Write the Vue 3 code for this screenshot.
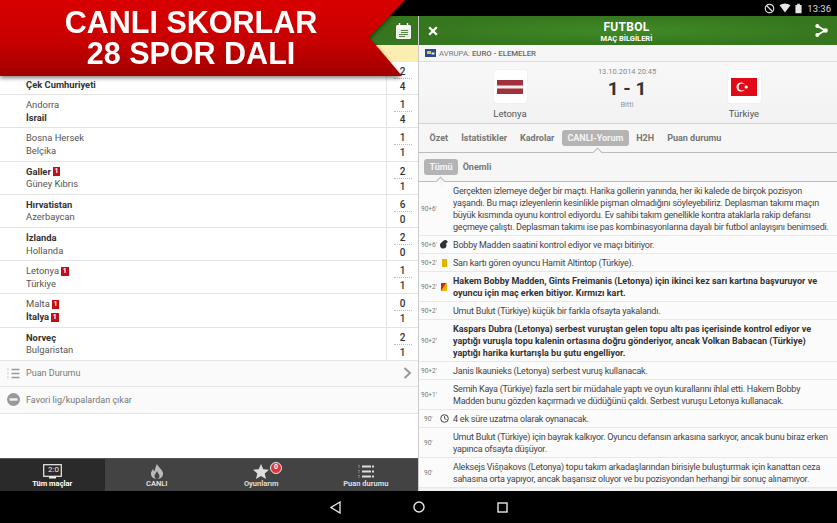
<template>
  <div class="screen">
    <div class="statusbar">
      <svg class="st-icon" width="11" height="11" viewBox="0 0 12 12"><circle cx="6" cy="6" r="4.600" fill="none" stroke="#ddd" stroke-width="1.300"/><path d="M3 3l6 6" stroke="#ddd" stroke-width="1.300"/></svg>
      <svg class="st-icon" width="12" height="10" viewBox="0 0 13 11"><path d="M0.500 2.500Q6.500 -1.500 12.500 2.500L6.500 10.500Z" fill="#e6e6e6"/></svg>
      <svg class="st-icon" width="7" height="11" viewBox="0 0 8 12"><path d="M2.500 0.500h3v1.500h2v9.500h-7V2h2z" fill="#e6e6e6"/></svg>
      <span class="clock">13:36</span>
    </div>

    <div class="panes">
      <div class="left">
        <div class="left-head">
          <div class="cal-box">
            <svg width="15" height="16" viewBox="0 0 15 16"><rect x=".6" y="2.600" width="13.800" height="12.800" rx="1" fill="#e6eee0" stroke="#fff" stroke-width="1.200"/><rect x="1" y="3" width="13" height="2.500" fill="#fff"/><path d="M3.500 0v3.500M11.500 0v3.500" stroke="#fff" stroke-width="1.400"/><path d="M5 7.500h7M5 9.500h7M3 11.500h9M3 13.500h6" stroke="#5f8350" stroke-width="1"/></svg>
          </div>
        </div>
        <div class="yellow"></div>
        <div class="matches">
          <div v-for="m in matches" :key="m.a + m.b" class="match">
            <div class="teams">
              <div class="team" :class="{ win: m.sa > m.sb }">{{ m.a }}<span v-if="m.ra" class="red">1</span></div>
              <div class="team" :class="{ win: m.sb > m.sa }">{{ m.b }}<span v-if="m.rb" class="red">1</span></div>
            </div>
            <div class="scores">
              <div class="s top">{{ m.sa }}</div>
              <div class="s">{{ m.sb }}</div>
            </div>
          </div>
        </div>
        <div class="action">
          <svg width="13" height="13" viewBox="0 0 13 13"><path d="M4.500 2.500h8M4.500 6.500h8M4.500 10.500h8" stroke="#999" stroke-width="1.500"/><path d="M1 1.500v2M1 5.500v2M1 9.500v2" stroke="#aaa" stroke-width="1" stroke-dasharray="1 .6"/></svg>
          <span>Puan Durumu</span>
          <svg class="chev" width="9" height="12" viewBox="0 0 9 12"><path d="M1.500 1l5.500 5-5.500 5" fill="none" stroke="#999" stroke-width="2"/></svg>
        </div>
        <div class="action">
          <svg width="13" height="13" viewBox="0 0 13 13"><circle cx="6.500" cy="6.500" r="6.500" fill="#999"/><rect x="2.500" y="5.300" width="8" height="2.400" fill="#f3f3f3"/></svg>
          <span>Favori lig/kupalardan çıkar</span>
        </div>
        <div class="spacer"></div>
        <div class="tabbar">
          <div class="tab on">
            <svg width="19" height="15" viewBox="0 0 19 15"><rect x=".7" y=".7" width="17.600" height="11.600" fill="none" stroke="#eee" stroke-width="1.200"/><rect x="6" y="12.500" width="7" height="2" fill="#eee"/></svg>
            <span class="score-ico">2:0</span>
            <b>Tüm maçlar</b>
          </div>
          <div class="tab">
            <svg width="14" height="15" viewBox="0 0 14 15"><path d="M7 0c1 3 5 5 6 9 .5 3-2 6-6 6s-6.500-3-6-6c.3-2 1.500-3 2-4 .5 1 .8 2 1.500 2.500C5 5 5.500 3 7 0z" fill="#bbb"/><path d="M7 7c.5 2 2.500 3 2.500 5 0 1.500-1 3-2.500 3s-2.500-1.500-2.500-3C4.500 10 6.500 9 7 7z" fill="#444"/></svg>
            <b>CANLI</b>
          </div>
          <div class="tab">
            <svg width="16" height="15" viewBox="0 0 16 15"><path d="M8 0l2.300 5.200 5.700.5-4.300 3.800 1.300 5.500L8 12l-5 3 1.300-5.500L0 5.700l5.700-.5z" fill="#ddd"/></svg>
            <span class="badge">0</span>
            <b>Oyunlarım</b>
          </div>
          <div class="tab">
            <svg width="16" height="15" viewBox="0 0 16 15"><path d="M4 2.500h9M4 7.500h9M4 12.500h9" stroke="#ddd" stroke-width="2"/><path d="M14 1.500h2v2h-2zM14 6.500h2v2h-2zM14 11.500h2v2h-2z" fill="#ddd"/><path d="M1 1v3M1 6v3M1 11v3" stroke="#bbb" stroke-width="1" stroke-dasharray="1 .6"/></svg>
            <b>Puan durumu</b>
          </div>
        </div>
      </div>

      <div class="right">
        <div class="right-head">
          <svg width="10" height="10" viewBox="0 0 10 10"><path d="M1.200 1.200l7.600 7.600M8.800 1.200l-7.600 7.600" stroke="#fff" stroke-width="2.200"/></svg>
          <div class="head-title"><b>FUTBOL</b><span>MAÇ BİLGİLERİ</span></div>
          <svg width="13" height="13" viewBox="0 0 13 13"><path d="M2.500 2l7.500 4.500-7.500 4.500" fill="none" stroke="#fff" stroke-width="1.800"/><circle cx="2.300" cy="2" r="2" fill="#fff"/><circle cx="2.300" cy="11" r="2" fill="#fff"/><circle cx="10.500" cy="6.500" r="2.300" fill="#fff"/></svg>
        </div>
        <div class="league">
          <svg width="11" height="8" viewBox="0 0 11 8"><rect width="11" height="8" fill="#2b4a8c"/><rect x="2" y="2" width="4" height="3" fill="#e6c43c"/><rect x="6.500" y="3.500" width="3" height="2" fill="#e8e8e8"/></svg>
          <span class="lg">AVRUPA:</span> <span class="lg2">EURO - ELEMELER</span>
        </div>
        <div class="match-info">
          <div class="side">
            <div class="flag-box">
              <svg width="26" height="14" viewBox="0 0 26 14"><rect width="26" height="14" fill="#a0303c"/><rect y="5.500" width="26" height="3" fill="#f4eeee"/></svg>
            </div>
            <span>Letonya</span>
          </div>
          <div class="mid">
            <div class="date">13.10.2014 20:45</div>
            <div class="big">1 - 1</div>
            <div class="done">Bitti</div>
          </div>
          <div class="side">
            <div class="flag-box">
              <svg width="26" height="18" viewBox="0 0 26 18"><rect width="26" height="18" fill="#e30a17"/><circle cx="10" cy="9" r="4.500" fill="#fff"/><circle cx="11.200" cy="9" r="3.600" fill="#e30a17"/><circle cx="15.200" cy="9" r="1.600" fill="#fff"/></svg>
            </div>
            <span>Türkiye</span>
          </div>
        </div>
        <div class="tabs">
          <span v-for="t in tabs" :key="t" class="t" :class="{ pill: t === 'CANLI-Yorum' }">{{ t }}</span>
          <i class="caret c1"></i>
        </div>
        <div class="subtabs">
          <span class="t pill">Tümü</span>
          <span class="t">Önemli</span>
          <i class="caret c2"></i>
        </div>
        <div class="feed">
          <div v-for="(r, i) in feed" :key="i" class="row">
            <div class="time" :class="{ ind: r.t === `90'` }">{{ r.t }}</div>
            <div class="ico">
              <svg v-if="r.i === 'w'" width="8" height="9" viewBox="0 0 8 9"><path d="M5 0c2 0 3 1 2.500 2.500L6 3.500c1 2 .5 5-2.500 5S0 6.500 0 5s1-2 2-3 2-2 3-2z" fill="#333"/></svg>
              <svg v-if="r.i === 'y'" width="5" height="8" viewBox="0 0 5 8"><rect width="5" height="8" fill="#e0b400"/></svg>
              <svg v-if="r.i === 'yr'" width="6" height="8" viewBox="0 0 6 8"><rect width="6" height="8" fill="#e8b800"/><path d="M0 8V0h5z" fill="#d82020"/></svg>
              <svg v-if="r.i === 'c'" width="9" height="9" viewBox="0 0 9 9"><circle cx="4.500" cy="4.500" r="3.800" fill="none" stroke="#444" stroke-width="1"/><path d="M4.500 2v2.700l2 .8" fill="none" stroke="#444" stroke-width=".9"/></svg>
            </div>
            <div class="txt" :class="{ bold: r.b }"><div v-for="l in r.l" :key="l">{{ l }}</div></div>
          </div>
        </div>
      </div>
    </div>

    <div class="navbar">
      <svg width="11" height="13" viewBox="0 0 11 13"><path d="M10 1L1 6.500 10 12z" fill="none" stroke="#e8e8e8" stroke-width="1.300"/></svg>
      <svg width="12" height="12" viewBox="0 0 12 12"><circle cx="6" cy="6" r="5" fill="none" stroke="#e8e8e8" stroke-width="1.400"/></svg>
      <svg width="11" height="11" viewBox="0 0 11 11"><rect x="1" y="1" width="9" height="9" fill="none" stroke="#e8e8e8" stroke-width="1.400"/></svg>
    </div>

    <div class="banner-wrap">
      <div class="banner">
        <div>CANLI SKORLAR</div>
        <div>28 SPOR DALI</div>
      </div>
    </div>
  </div>
</template>

<script setup>
const matches = [
  { a: 'Kazakistan', b: 'Çek Cumhuriyeti', sa: 2, sb: 4 },
  { a: 'Andorra', b: 'İsrail', sa: 1, sb: 4 },
  { a: 'Bosna Hersek', b: 'Belçika', sa: 1, sb: 1 },
  { a: 'Galler', b: 'Güney Kıbrıs', sa: 2, sb: 1, ra: true },
  { a: 'Hırvatistan', b: 'Azerbaycan', sa: 6, sb: 0 },
  { a: 'İzlanda', b: 'Hollanda', sa: 2, sb: 0 },
  { a: 'Letonya', b: 'Türkiye', sa: 1, sb: 1, ra: true },
  { a: 'Malta', b: 'İtalya', sa: 0, sb: 1, ra: true, rb: true },
  { a: 'Norveç', b: 'Bulgaristan', sa: 2, sb: 1 }
]

const tabs = ['Özet', 'İstatistikler', 'Kadrolar', 'CANLI-Yorum', 'H2H', 'Puan durumu']

const feed = [
  { t: '90+6\'', l: [
    'Gerçekten izlemeye değer bir maçtı. Harika gollerin yanında, her iki kalede de birçok pozisyon',
    'yaşandı. Bu maçı izleyenlerin kesinlikle pişman olmadığını söyleyebiliriz. Deplasman takımı maçın',
    'büyük kısmında oyunu kontrol ediyordu. Ev sahibi takım genellikle kontra ataklarla rakip defansı',
    'geçmeye çalıştı. Deplasman takımı ise pas kombinasyonlarına dayalı bir futbol anlayışını benimsedi.'
  ] },
  { t: '90+6\'', i: 'w', l: ['Bobby Madden saatini kontrol ediyor ve maçı bitiriyor.'] },
  { t: '90+2\'', i: 'y', l: ['Sarı kartı gören oyuncu Hamit Altintop (Türkiye).'] },
  { t: '90+2\'', i: 'yr', b: true, l: [
    'Hakem Bobby Madden, Gints Freimanis (Letonya) için ikinci kez sarı kartına başvuruyor ve',
    'oyuncu için maç erken bitiyor. Kırmızı kart.'
  ] },
  { t: '90+2\'', l: ['Umut Bulut (Türkiye) küçük bir farkla ofsayta yakalandı.'] },
  { t: '90+2\'', b: true, l: [
    'Kaspars Dubra (Letonya) serbest vuruştan gelen topu altı pas içerisinde kontrol ediyor ve',
    'yaptığı vuruşla topu kalenin ortasına doğru gönderiyor, ancak Volkan Babacan (Türkiye)',
    'yaptığı harika kurtarışla bu şutu engelliyor.'
  ] },
  { t: '90+2\'', l: ['Janis Ikaunieks (Letonya) serbest vuruş kullanacak.'] },
  { t: '90+1\'', l: [
    'Semih Kaya (Türkiye) fazla sert bir müdahale yaptı ve oyun kurallarını ihlal etti. Hakem Bobby',
    'Madden bunu gözden kaçırmadı ve düdüğünü çaldı. Serbest vuruşu Letonya kullanacak.'
  ] },
  { t: '90\'', i: 'c', l: ['4 ek süre uzatma olarak oynanacak.'] },
  { t: '90\'', l: [
    'Umut Bulut (Türkiye) için bayrak kalkıyor. Oyuncu defansın arkasına sarkıyor, ancak bunu biraz erken',
    'yapınca ofsayta düşüyor.'
  ] },
  { t: '90\'', l: [
    'Aleksejs Višņakovs (Letonya) topu takım arkadaşlarından birisiyle buluşturmak için kanattan ceza',
    'sahasına orta yapıyor, ancak başarısız oluyor ve bu pozisyondan herhangi bir sonuç alınamıyor.'
  ] }
]
</script>

<style>
html, body { margin: 0; background: #000; }
</style>

<style scoped>
.screen {
  position: relative;
  width: 837px;
  height: 523px;
  overflow: hidden;
  display: flex;
  flex-direction: column;
  font-family: Roboto, "Liberation Sans", sans-serif;
  color: #444;
  background: #000;
}
.statusbar {
  height: 16px;
  flex: none;
  display: flex;
  align-items: center;
  justify-content: flex-end;
  gap: 4px;
  padding-right: 6px;
  background: #000;
}
.clock { color: #ddd; font-size: 9.500px; margin-left: 1px; }
.panes { flex: 1; display: flex; min-height: 0; }
.left { width: 418px; flex: none; display: flex; flex-direction: column; background: #fff; }
.left-head { height: 29px; flex: none; background: #36761f; display: flex; justify-content: flex-end; }
.cal-box { width: 30px; display: flex; align-items: center; justify-content: center; }
.yellow { height: 17px; flex: none; background: #fbeeb0; }
.match { height: 33.200px; box-sizing: border-box; display: flex; border-bottom: 1px solid #e4e4e4; }
.teams { flex: 1; padding: 4px 0 0 26px; }
.team { font-size: 9.400px; line-height: 12.600px; color: #555; display: flex; align-items: center; }
.team.win { font-weight: 700; color: #333; }
.red {
  display: inline-block;
  width: 7.500px;
  height: 9px;
  margin-left: 2px;
  background: #c40d10;
  color: #fff;
  font-size: 7px;
  font-weight: 700;
  line-height: 9px;
  text-align: center;
}
.scores { width: 31px; flex: none; border-left: 1px solid #e4e4e4; padding-top: 3px; }
.s { width: 18px; margin: 0 auto; font-size: 10px; font-weight: 500; line-height: 13px; text-align: center; color: #333; }
.s.top { border-bottom: 1px dotted #bbb; margin-bottom: 1px; }
.action {
  height: 26.500px;
  flex: none;
  box-sizing: border-box;
  display: flex;
  align-items: center;
  gap: 6px;
  padding: 0 6px 0 7px;
  background: #fafafa;
  border-bottom: 1px solid #e6e6e6;
  font-size: 9px;
  color: #777;
}
.chev { margin-left: auto; }
.spacer { flex: 1; background: #fff; }
.tabbar { height: 32px; flex: none; display: flex; background: #434343; border-top: 1px solid #555; }
.tab {
  position: relative;
  width: 105px;
  display: flex;
  flex-direction: column;
  align-items: center;
  padding-top: 5px;
  box-sizing: border-box;
}
.tab.on { background: #2a2a2a; }
.tab b { font-size: 7.500px; line-height: 10px; color: #ddd; }
.tab.on b { color: #fff; }
.score-ico { position: absolute; top: 6px; left: 45px; font-size: 8px; line-height: 10px; color: #eee; width: 17px; text-align: center; }
.badge {
  position: absolute;
  top: 3px;
  left: 61px;
  width: 12px;
  height: 12px;
  border-radius: 50%;
  background: #e03535;
  border: 1.500px solid #eee;
  box-sizing: border-box;
  color: #fff;
  font-size: 7px;
  font-weight: 700;
  line-height: 9px;
  text-align: center;
}
.right { flex: 1; display: flex; flex-direction: column; background: #f6f6f6; border-left: 1px solid #ccc; min-width: 0; }
.right-head {
  height: 29px;
  flex: none;
  display: flex;
  align-items: center;
  justify-content: space-between;
  padding: 0 9px;
  background: radial-gradient(ellipse at center, #408a26 0, #36761f 70%);
}
.head-title { display: flex; flex-direction: column; align-items: center; color: #fff; padding-top: 2px; }
.head-title b { font-size: 12px; line-height: 13px; letter-spacing: .3px; }
.head-title span { font-size: 7.500px; line-height: 9px; font-weight: 700; }
.league {
  height: 17px;
  flex: none;
  display: flex;
  align-items: center;
  gap: 2px;
  padding-left: 6px;
  border-bottom: 1px solid #ddd;
  box-sizing: border-box;
  font-size: 7.800px;
}
.league svg { margin-right: 1px; }
.lg { color: #777; }
.lg2 { color: #666; font-weight: 500; }
.match-info {
  height: 62px;
  flex: none;
  box-sizing: border-box;
  display: flex;
  justify-content: space-between;
  padding: 8px 68px 0 66px;
  border-bottom: 1px solid #d4d4d4;
  background: linear-gradient(#f8f8f8, #f2f2f2);
}
.side { width: 50px; display: flex; flex-direction: column; align-items: center; gap: 5px; font-size: 9.500px; color: #555; }
.flag-box {
  width: 33px;
  height: 33px;
  background: #fff;
  border-radius: 2px;
  box-shadow: 0 0 1px #ccc;
  display: flex;
  align-items: center;
  justify-content: center;
}
.mid { display: flex; flex-direction: column; align-items: center; margin-top: -4px; }
.date { font-size: 7.500px; line-height: 11px; color: #888; }
.big { font-size: 19px; line-height: 22px; font-weight: 700; color: #333; margin-top: 1px; }
.done { font-size: 7.500px; line-height: 9px; color: #999; }
.tabs {
  position: relative;
  height: 29px;
  flex: none;
  box-sizing: border-box;
  display: flex;
  align-items: center;
  padding-left: 5px;
  border-bottom: 1px solid #bbb;
}
.t { padding: 0 5.500px; font-size: 9px; line-height: 16px; font-weight: 700; color: #777; white-space: nowrap; margin-right: 2px; }
.subtabs .t + .t { margin-left: -3px; }
.pill { background: #b4b4b4; color: #f4f4f4; border-radius: 3px; }
.subtabs {
  position: relative;
  height: 29px;
  flex: none;
  box-sizing: border-box;
  display: flex;
  align-items: center;
  padding-left: 5px;
  border-bottom: 1px solid #bbb;
}
.caret {
  position: absolute;
  bottom: -4px;
  width: 6px;
  height: 6px;
  background: #f6f6f6;
  border-left: 1px solid #bbb;
  border-top: 1px solid #bbb;
  transform: rotate(45deg);
}
.c1 { left: 175px; }
.c2 { left: 18px; }
.feed { flex: 1; min-height: 0; overflow: hidden; background: #f3f3f3; }
.row { display: flex; align-items: center; background: #fbfbfb; border-bottom: 1.500px solid #e8e8e8; padding: 2.500px 0; }
.time { width: 19px; flex: none; padding-left: 2px; box-sizing: border-box; font-size: 6.500px; color: #777; white-space: nowrap; }
.time.ind { padding-left: 5px; }
.ico { width: 12px; flex: none; display: flex; justify-content: center; }
.txt { padding-left: 3px; font-size: 9px; line-height: 12px; letter-spacing: -.22px; color: #444; white-space: nowrap; }
.txt.bold { font-weight: 700; color: #333; letter-spacing: 0; }
.navbar {
  height: 32px;
  flex: none;
  display: flex;
  align-items: center;
  justify-content: center;
  gap: 72px;
  background: #000;
}
.banner-wrap {
  position: absolute;
  left: 0;
  top: 0;
  filter: drop-shadow(0 2px 2px rgba(0, 0, 0, .5));
}
.banner {
  width: 405px;
  height: 76px;
  box-sizing: border-box;
  padding: 7px 23px 0 0;
  clip-path: polygon(0 0, 100% 0, 369px 37px, 402px 100%, 0 100%);
  background: linear-gradient(#d80000 0, #c80000 55%, #a00000 100%);
  color: #fff;
  font-family: "Liberation Sans", Arial, sans-serif;
  font-size: 30.500px;
  font-weight: 700;
  line-height: 31px;
  text-align: center;
}
</style>
